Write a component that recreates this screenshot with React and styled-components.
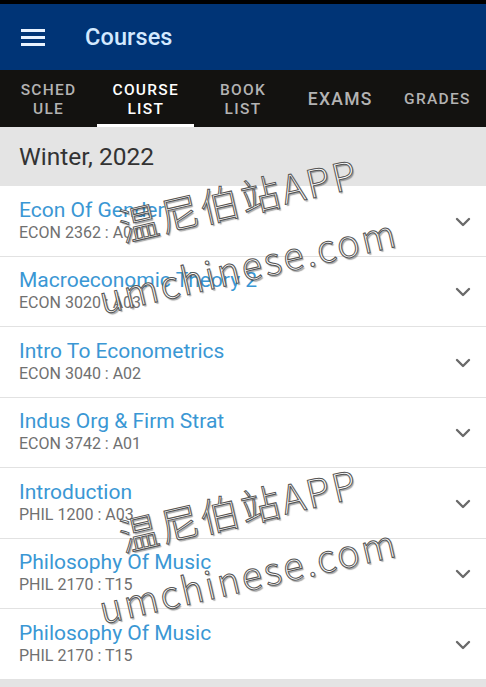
import React from "react";
import styled, { createGlobalStyle } from "styled-components";

const GlobalStyle = createGlobalStyle`
    html, body {
        margin: 0;
        padding: 0;
        background: #e4e4e4;
        font-family: Roboto, "Noto Sans", "Liberation Sans", sans-serif;
    }
`

const Page = styled.div`
    position: relative;
    width: 486px;
    min-height: 687px;
    background: #e4e4e4;
    overflow: hidden;
    border-top: 4px solid #000;
    box-sizing: border-box;
`

const AppBar = styled.header`
    height: 66px;
    background: #003476;
    display: flex;
    align-items: center;
    padding-left: 21px;
    gap: 40px;
`

const MenuButton = styled.div`
    width: 24px;
    display: flex;
    flex-direction: column;
    gap: 4px;
    span {
        display: block;
        height: 3px;
        background: #e8f2ff;
    }
`

const Title = styled.h1`
    margin: 0;
    font-size: 23.5px;
    font-weight: 500;
    color: #d3e9ff;
    letter-spacing: 0.1px;
`

const TabBar = styled.nav`
    height: 57px;
    background: #131210;
    display: grid;
    grid-template-columns: repeat(5, 1fr);
`

const Tab = styled.div`
    display: flex;
    align-items: center;
    justify-content: center;
    text-align: center;
    font-size: ${p => p.$size || 15.5}px;
    font-weight: 500;
    letter-spacing: 1.3px;
    line-height: 19px;
    color: ${p => (p.$active ? "#ffffff" : "#b3b3b3")};
    border-bottom: 3px solid ${p => (p.$active ? "#ffffff" : "transparent")};
    padding-top: 5px;
`

const TermHeader = styled.div`
    height: 59px;
    display: flex;
    align-items: center;
    padding-left: 19px;
    font-size: 24.5px;
    color: #333;
`

const List = styled.ul`
    list-style: none;
    margin: 0;
    padding: 0;
    background: #fff;
`

const Row = styled.li`
    display: flex;
    align-items: center;
    padding: 12px 14px 12px 19px;
    height: 70.5px;
    box-sizing: border-box;
    border-bottom: 1px solid #e2e2e2;
`

const RowText = styled.div`
    flex: 1;
`

const CourseName = styled.div`
    font-size: 21px;
    line-height: 24px;
    color: #3a97d4;
`

const CourseCode = styled.div`
    font-size: 16px;
    line-height: 22px;
    color: #707070;
`

const Chevron = styled.svg`
    width: 18px;
    height: 18px;
    margin-top: 2px;
`

const Watermark = styled.div`
    position: absolute;
    left: ${p => p.$left}px;
    top: ${p => p.$top}px;
    transform: rotate(-13deg);
    transform-origin: left top;
    pointer-events: none;
    color: #fff;
    -webkit-text-stroke: 1px #555;
    text-shadow: 1px 2px 1px rgba(0,0,0,0.35);
    line-height: 1.25;
`

const MarkLine = styled.div`
    white-space: nowrap;
    font-size: ${p => p.$size}px;
    letter-spacing: ${p => p.$spacing}px;
    margin-left: ${p => p.$indent}px;
    margin-top: ${p => p.$gap || 0}px;
    font-family: "Noto Sans CJK SC", "Noto Sans", sans-serif;
    font-weight: 300;
`

const tabs = [
    { label: ["SCHED", "ULE"] },
    { label: ["COURSE", "LIST"], active: true },
    { label: ["BOOK", "LIST"] },
    { label: ["EXAMS"], size: 17.5 },
    { label: ["GRADES"] },
];

const courses = [
    ["Econ Of Gender", "ECON 2362 : A01"],
    ["Macroeconomic Theory 2", "ECON 3020 : A03"],
    ["Intro To Econometrics", "ECON 3040 : A02"],
    ["Indus Org & Firm Strat", "ECON 3742 : A01"],
    ["Introduction", "PHIL 1200 : A03"],
    ["Philosophy Of Music", "PHIL 2170 : T15"],
    ["Philosophy Of Music", "PHIL 2170 : T15"],
];

const Mark = ({ top }) => (
    <Watermark $left={114} $top={top}>
        <MarkLine $size={39} $spacing={2.5} $indent={0}>温尼伯站APP</MarkLine>
        <MarkLine $size={38} $spacing={2.5} $indent={-36} $gap={18}>umchinese.com</MarkLine>
    </Watermark>
);

const App = () => {
    return (
        <Page>
            <GlobalStyle />
            <AppBar>
                <MenuButton>
                    <span /><span /><span />
                </MenuButton>
                <Title>Courses</Title>
            </AppBar>
            <TabBar>
                {tabs.map((t, i) => (
                    <Tab key={i} $active={t.active} $size={t.size}>
                        <div>
                            {t.label.map(l => <div key={l}>{l}</div>)}
                        </div>
                    </Tab>
                ))}
            </TabBar>
            <TermHeader>Winter, 2022</TermHeader>
            <List>
                {courses.map(([name, code], i) => (
                    <Row key={i}>
                        <RowText>
                            <CourseName>{name}</CourseName>
                            <CourseCode>{code}</CourseCode>
                        </RowText>
                        <Chevron viewBox="0 0 24 24" fill="none" stroke="#6a6a6a" strokeWidth="3.2" strokeLinecap="round" strokeLinejoin="round">
                            <polyline points="4 8 12 16 20 8" />
                        </Chevron>
                    </Row>
                ))}
            </List>
            <Mark top={198} />
            <Mark top={508} />
        </Page>
    );
};

export default App;
